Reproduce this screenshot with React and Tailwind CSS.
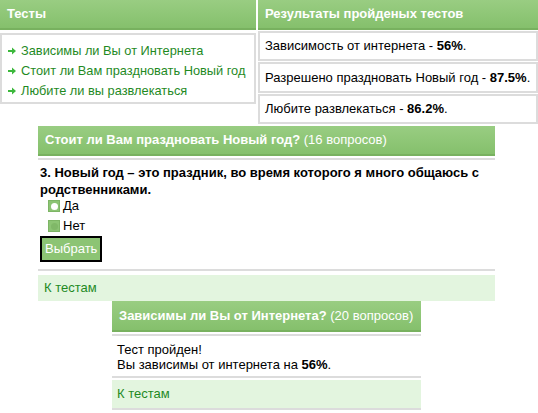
const hdr = 'bg-gradient-to-b from-[#99cd82] to-[#85c06c] border-b-2 border-[#78b15f] text-white font-bold text-[13px] px-[7px]'

function Arrow() {
  return (
    <svg width="8" height="8" viewBox="0 0 8 8" className="shrink-0">
      <path d="M0 3h4V0.5L8 4 4 7.5V5H0z" fill="#3cb83c" />
    </svg>
  )
}

export default function App() {
  return (
    <div className="w-[538px] h-[413px] bg-white text-[13px] text-black overflow-hidden" style={{ fontFamily: '"Liberation Sans", Arial, sans-serif' }}>
      <div className="flex">
        <div className="w-[256px]">
          <div className={`${hdr} h-[30px] flex items-center`}>Тесты</div>
          <div className="mt-[3px] border-2 border-[#dcdcdc] px-[6px] pt-[6px] flex flex-col text-[#1f8a1f] h-[71px] leading-[20px] text-[12.8px] whitespace-nowrap">
            <a className="flex items-center gap-[5px]"><Arrow />Зависимы ли Вы от Интернета</a>
            <a className="flex items-center gap-[5px]"><Arrow />Стоит ли Вам праздновать Новый год</a>
            <a className="flex items-center gap-[5px]"><Arrow />Любите ли вы развлекаться</a>
          </div>
        </div>
        <div className="ml-[2px] flex-1">
          <div className={`${hdr} h-[30px] flex items-center`}>Результаты пройденых тестов</div>
          <div className="mt-[1px] border-2 border-[#dcdcdc] h-[30px] leading-[26px] px-[5px]">Зависимость от интернета - <b>56%</b>.</div>
          <div className="mt-[1px] border-2 border-[#dcdcdc] h-[31px] leading-[27px] px-[5px]">Разрешено праздновать Новый год - <b>87.5%</b>.</div>
          <div className="mt-[1px] border-2 border-[#dcdcdc] h-[30px] leading-[26px] px-[5px]">Любите развлекаться - <b>86.2%</b>.</div>
        </div>
      </div>

      <div className="ml-[38px] w-[457px] mt-[2px]">
        <div className={`${hdr} h-[30px] flex items-center`}><span>Стоит ли Вам праздновать Новый год? <span className="font-normal">(16 вопросов)</span></span></div>
        <div className="mt-[2px] border-t-2 border-b-2 border-[#dcdcdc] px-[2px] pt-[4px] pb-[7px]">
          <div className="font-bold leading-[17px]">3. Новый год – это праздник, во время которого я много общаюсь с родственниками.</div>
          <label className="flex items-center gap-[3px] h-[20px] -mt-[2px]">
            <span className="ml-[8px] w-[12px] h-[12px] bg-[#8cc474] border border-[#7db565] flex items-center justify-center">
              <span className="w-[7px] h-[7px] rounded-full bg-white" />
            </span>
            Да
          </label>
          <label className="flex items-center gap-[3px] h-[20px]">
            <span className="ml-[8px] w-[12px] h-[12px] bg-[#8cc474] border border-[#7db565] flex items-center justify-center">
              <span className="w-[7px] h-[7px] rounded-full bg-[#80b868]" />
            </span>
            Нет
          </label>
          <button className="h-[26px] px-[3px] bg-[#8cc474] border-2 border-black text-white text-[13px]">Выбрать</button>
        </div>
        <div className="mt-[4px] bg-[#e3f5df] h-[26px] flex items-center px-[6px] text-[#1f8a1f]">К тестам</div>
      </div>

      <div className="ml-[112px] w-[309px]">
        <div className={`${hdr} h-[31px] flex items-center`}><span>Зависимы ли Вы от Интернета? <span className="font-normal">(20 вопросов)</span></span></div>
        <div className="mt-[2px] border-t-2 border-b-2 border-[#dcdcdc] px-[5px] pt-[6px] pb-[4px] leading-[15px]">
          <div>Тест пройден!</div>
          <div>Вы зависимы от интернета на <b>56%</b>.</div>
        </div>
        <div className="mt-[2px] bg-[#e3f5df] border-b-2 border-[#dcdcdc] h-[30px] flex items-center px-[5px] text-[#1f8a1f]">К тестам</div>
      </div>
    </div>
  )
}
